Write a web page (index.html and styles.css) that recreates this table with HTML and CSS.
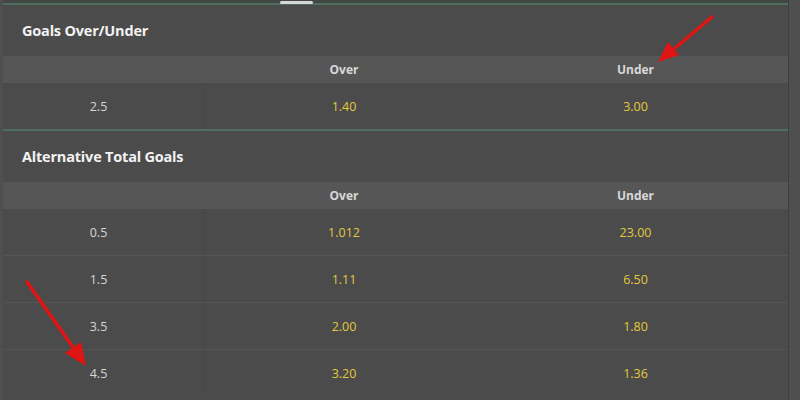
FILE: index.html
```html
<!DOCTYPE html>
<html lang="en">
  <head>
    <meta charset="UTF-8" />
    <title>goals markets</title>
    <link rel="stylesheet" href="styles.css">
  </head>
  <body>
    <div class="page">
      <div class="tabs"><span class="tab-mark"></span></div>
      <div class="market">
        <h3 class="title">Goals Over/Under</h3>
        <div class="row head">
          <span></span><span>Over</span><span>Under</span>
        </div>
        <div class="row">
          <span class="line">2.5</span><span class="odd">1.40</span><span class="odd">3.00</span>
        </div>
      </div>
      <div class="market">
        <h3 class="title">Alternative Total Goals</h3>
        <div class="row head">
          <span></span><span>Over</span><span>Under</span>
        </div>
        <div class="row">
          <span class="line">0.5</span><span class="odd">1.012</span><span class="odd">23.00</span>
        </div>
        <div class="row">
          <span class="line">1.5</span><span class="odd">1.11</span><span class="odd">6.50</span>
        </div>
        <div class="row">
          <span class="line">3.5</span><span class="odd">2.00</span><span class="odd">1.80</span>
        </div>
        <div class="row">
          <span class="line">4.5</span><span class="odd">3.20</span><span class="odd">1.36</span>
        </div>
      </div>
    </div>

    <svg class="arrows" width="800" height="400" viewBox="0 0 800 400">
      <line x1="712" y1="17" x2="675" y2="48" stroke="#e11414" stroke-width="3.5" stroke-linecap="round" />
      <polygon points="658,62 679,55 668,42" fill="#e11414" />
      <line x1="27" y1="282" x2="75" y2="350" stroke="#e11414" stroke-width="3.5" stroke-linecap="round" />
      <polygon points="86,366 81,342 65,353" fill="#e11414" />
    </svg>
  </body>
</html>
```

FILE: styles.css
```css
* {
  padding: 0;
  margin: 0;
  box-sizing: border-box;
}
body {
  background: #4f4f4f;
  font-family: "Open Sans", "Noto Sans", sans-serif;
  width: 800px;
  height: 400px;
  overflow: hidden;
  position: relative;
}
.page {
  width: 786px;
  margin-left: 3px;
  border-right: 1px solid #3e3e3e;
  background: #4b4b4b;
  height: 400px;
}
.tabs {
  height: 5px;
  background: #434744;
  border-bottom: 2px solid #4f6e60;
  position: relative;
}
.tab-mark {
  position: absolute;
  left: 277px;
  top: 1px;
  width: 33px;
  height: 3px;
  background: #d8d8d8;
  border-radius: 2px;
}
.market {
  border-bottom: 2px solid #4f6e60;
}
.market:last-child {
  border-bottom: none;
}
.title {
  height: 51px;
  padding: 16px 0 0 19px;
  font-size: 14.5px;
  font-weight: 700;
  color: #f2f2f2;
  letter-spacing: -0.2px;
}
.row {
  display: grid;
  grid-template-columns: 202px 278px 1fr;
  height: 47px;
  align-items: center;
  text-align: center;
  font-size: 12.5px;
  border-bottom: 1px solid #555;
}
.row:last-child {
  border-bottom: none;
  height: 46px;
}
.row span {
  height: 100%;
  display: flex;
  align-items: center;
  justify-content: center;
}
.row span:first-child {
  border-right: 1px solid #474747;
}
.head {
  height: 27px;
  background: #565656;
  color: #d8d8d8;
  font-weight: 700;
  font-size: 12px;
  border-bottom: none;
}
.head span:first-child {
  border-right: none;
}
.line {
  color: #d6d6d6;
  padding-right: 10px;
}
.odd {
  color: #e3c93c;
}
.arrows {
  position: absolute;
  left: 0;
  top: 0;
  pointer-events: none;
}
```
